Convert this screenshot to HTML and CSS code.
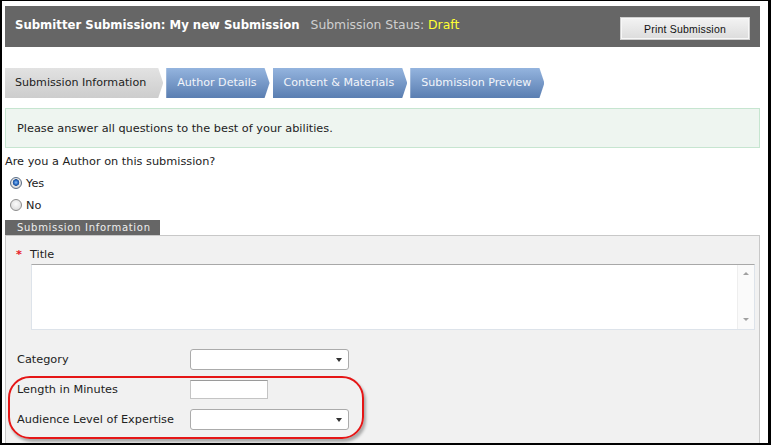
FILE: index.html
```html
<!DOCTYPE html>
<html lang="en">
<head>
    <meta charset="UTF-8">
    <title>Submitter Submission</title>
    <link rel="stylesheet" href="styles.css">
</head>
<body>
    <div class="frame">
        <div class="header">
            <h1>Submitter Submission: My new Submission</h1>
            <span class="status">Submission Staus: <em>Draft</em></span>
            <button class="print">Print Submission</button>
        </div>

        <!-- wizard steps -->
        <div class="steps">
            <div class="step current">Submission Information</div>
            <div class="step">Author Details</div>
            <div class="step">Content &amp; Materials</div>
            <div class="step">Submission Preview</div>
        </div>

        <div class="notice">Please answer all questions to the best of your abilities.</div>

        <div class="question">
            <p>Are you a Author on this submission?</p>
            <label class="choice"><input type="radio" name="author" checked> Yes</label>
            <label class="choice"><input type="radio" name="author"> No</label>
        </div>

        <div class="section">
            <div class="section-tab">Submission Information</div>
            <div class="panel">
                <div class="field-title">
                    <span class="req">*</span>
                    <label>Title</label>
                </div>
                <div class="textarea">
                    <div class="ta-body"></div>
                    <div class="ta-scroll">
                        <span class="arrow-up"></span>
                        <span class="arrow-down"></span>
                    </div>
                </div>

                <div class="rows">
                    <div class="row">
                        <label>Category</label>
                        <div class="select"></div>
                    </div>
                    <div class="row">
                        <label>Length in Minutes</label>
                        <div class="text-input"></div>
                    </div>
                    <div class="row">
                        <label>Audience Level of Expertise</label>
                        <div class="select"></div>
                    </div>
                </div>

                <!-- annotation -->
                <div class="highlight"></div>
            </div>
        </div>
    </div>
</body>
</html>
```

FILE: styles.css
```css
html, body {
    margin: 0;
    padding: 0;
    background: #fff;
}
body {
    font-family: "DejaVu Sans", Verdana, sans-serif;
    font-size: 11.3px;
    color: #222;
}
.frame {
    position: relative;
    width: 771px;
    height: 445px;
    box-sizing: border-box;
    border: 1px solid #000;
    border-left-width: 2px;
    border-right-width: 3px;
    border-bottom-width: 2px;
    padding: 5px 8px 0 3px;
    overflow: hidden;
}
.header {
    display: flex;
    align-items: flex-start;
    height: 41px;
    box-sizing: border-box;
    padding: 11px 10px 0 10px;
    background: #666666;
}
.header h1 {
    margin: 0;
    font-size: 11.7px;
    line-height: 16px;
    font-weight: bold;
    color: #fff;
}
.status {
    margin-left: 11px;
    font-size: 12.4px;
    line-height: 16px;
    color: #cfcfcf;
}
.status em {
    font-style: normal;
    color: #ffff33;
}
.print {
    margin-left: auto;
    margin-top: 0;
    width: 130px;
    height: 23px;
    border: 1px solid #cfcfcf;
    box-shadow: inset 0 0 0 1px #f7f7f7;
    background: linear-gradient(#f3f3f3, #dcdcdc);
    font-family: "Liberation Sans", Arial, sans-serif;
    font-size: 10.5px;
    letter-spacing: 0.2px;
    color: #111;
    padding: 0;
}
.steps {
    display: flex;
    gap: 3px;
    margin-top: 21px;
}
.step {
    height: 30px;
    line-height: 30px;
    padding: 0 13px 0 11px;
    font-size: 11.1px;
    color: #f2f5fa;
    background: linear-gradient(#94b4de, #5a7eb1);
    clip-path: polygon(0 0, calc(100% - 5px) 0, 100% 50%, calc(100% - 5px) 100%, 0 100%);
}
.step.current {
    padding-left: 10px;
    padding-right: 17px;
    color: #222;
    background: linear-gradient(#e2e2e2, #cdcdcd);
}
.notice {
    margin-top: 10px;
    height: 40px;
    box-sizing: border-box;
    line-height: 39px;
    padding-left: 11px;
    border: 1px solid #c6e5d0;
    background: #eef5f0;
}
.question p {
    margin: 4px 0 0 0;
    line-height: 20px;
}
.choice {
    display: flex;
    align-items: center;
    height: 22px;
    padding-left: 5px;
}
.choice input {
    appearance: none;
    -webkit-appearance: none;
    width: 12px;
    height: 12px;
    margin: 0 4px 0 0;
    border: 1px solid #8d8d8d;
    border-radius: 50%;
    box-sizing: border-box;
    background: radial-gradient(circle at 50% 40%, #fbfbfb, #d4d4d4);
}
.choice input:checked {
    border-color: #5d6f86;
    background: radial-gradient(circle at 50% 45%, #8ec0f5 0, #2a6cc4 2px, #1c4f98 3px, #e9e9e9 3.6px, #cfcfcf 6px);
}
.section {
    margin-top: 4px;
}
.section-tab {
    width: 155px;
    height: 15px;
    box-sizing: border-box;
    padding-left: 12px;
    line-height: 15px;
    font-size: 10px;
    letter-spacing: 0.7px;
    color: #eeeeee;
    background: #666666;
}
.panel {
    position: relative;
    height: 260px;
    border: 1px solid #c8c8c8;
    background: #f1f1f1;
    padding: 10px 4px 0 11px;
}
.field-title {
    display: flex;
    height: 18px;
    line-height: 18px;
}
.req {
    width: 14px;
    margin-left: -1px;
    color: #e8202a;
    font-weight: bold;
}
.textarea {
    display: flex;
    margin-left: 14px;
    height: 66px;
    box-sizing: border-box;
    border: 1px solid #dde3ea;
    border-top-color: #a8a8a8;
    background: #fff;
}
.ta-body {
    flex: 1;
}
.ta-scroll {
    width: 16px;
    display: flex;
    flex-direction: column;
    justify-content: space-between;
    align-items: center;
    padding: 7px 0 8px;
    border-left: 1px solid #eeeeee;
    background: #fafafa;
}
.arrow-up, .arrow-down {
    width: 0;
    height: 0;
    border-left: 3px solid transparent;
    border-right: 3px solid transparent;
}
.arrow-up {
    border-bottom: 3px solid #a0a0a0;
}
.arrow-down {
    border-top: 3px solid #a0a0a0;
}
.rows {
    margin-top: 14px;
}
.row {
    display: flex;
    align-items: center;
    height: 30px;
}
.row label {
    width: 173px;
}
.select {
    position: relative;
    width: 159px;
    height: 21px;
    box-sizing: border-box;
    border: 1px solid #ababab;
    border-radius: 3px;
    background: #fff;
}
.select::after {
    content: "";
    position: absolute;
    right: 6px;
    top: 8px;
    border-left: 3.5px solid transparent;
    border-right: 3.5px solid transparent;
    border-top: 4px solid #333;
}
.text-input {
    width: 78px;
    height: 19px;
    box-sizing: border-box;
    border: 1px solid #c4c4c4;
    border-top-color: #9a9a9a;
    background: #fff;
}
.highlight {
    position: absolute;
    left: 2px;
    top: 140px;
    width: 356px;
    height: 63px;
    box-sizing: border-box;
    border: 2px solid #e51616;
    border-radius: 22px;
    box-shadow: 2px 3px 3px rgba(0, 0, 0, 0.3);
}
```
